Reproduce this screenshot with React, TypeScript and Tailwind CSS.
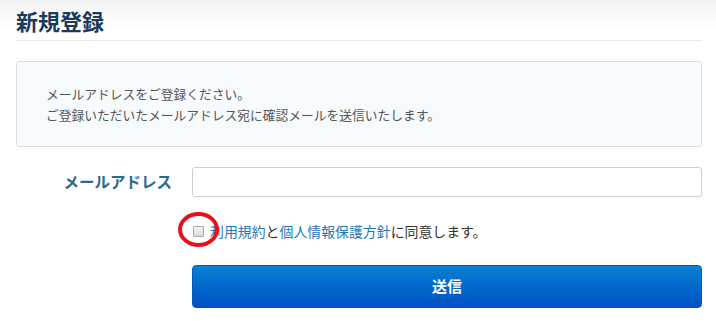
import React, { useState } from 'react';

const font = { fontFamily: '"Noto Sans CJK JP", "Noto Sans", sans-serif' };

const App: React.FC = () => {
  const [email, setEmail] = useState('');
  const [agreed, setAgreed] = useState(false);

  return (
    <div
      className="min-h-[327px] w-[716px] bg-gradient-to-b from-[#f2f3f4] via-white via-[30px] to-white pl-4 pr-[14px]"
      style={font}
    >
      {/* Title */}
      <div className="border-b border-[#e8e8e8] pt-[5px] pb-[5px]">
        <h1 className="text-[22px] font-bold leading-[30px] text-[#1b3a5c]">新規登録</h1>
      </div>

      {/* Notice box */}
      <div className="mt-5 rounded-[3px] border border-[#dedede] bg-[#f6fafd] px-[29px] py-[21px] text-[12.75px] leading-[21px] text-[#555]">
        <p>メールアドレスをご登録ください。</p>
        <p>ご登録いただいたメールアドレス宛に確認メールを送信いたします。</p>
      </div>

      {/* Form */}
      <div className="mt-5 grid grid-cols-[156px_1fr] gap-x-5">
        <label className="flex h-[30px] items-center justify-end text-[15.5px] font-bold text-[#2d6a90]">
          メールアドレス
        </label>
        <input
          type="email"
          value={email}
          onChange={e => setEmail(e.target.value)}
          className="h-[30px] rounded-[3px] border border-[#cfcfcf] bg-white px-2 text-sm outline-none"
        />

        <div />
        <div className="mt-6 flex h-5 items-center">
          <span className="relative ml-[1px] flex items-center">
            <input
              type="checkbox"
              checked={agreed}
              onChange={e => setAgreed(e.target.checked)}
              className="h-[11px] w-[11px] appearance-none rounded-[1px] border border-[#a8a8a8] bg-gradient-to-b from-[#f4f4f4] to-[#dcdcdc] checked:bg-[#3b82f6]"
            />
            {/* red annotation circle */}
            <span className="pointer-events-none absolute left-[-15px] top-[-14px] h-[35px] w-[41px] rounded-[50%] border-[4px] border-[#e8101a]" />
          </span>
          <span className="ml-[6px] text-[13.9px] leading-5 text-[#333]">
            <a className="text-[#1d78b8]">利用規約</a>と<a className="text-[#1d78b8]">個人情報保護方針</a>に同意します。
          </span>
        </div>

        <div />
        <button className="mt-6 h-[43px] rounded-[4px] border border-[#0a58b5] bg-gradient-to-b from-[#0c80d2] to-[#0250c4] text-[15px] font-bold text-white">
          送信
        </button>
      </div>
    </div>
  );
};

export default App;
